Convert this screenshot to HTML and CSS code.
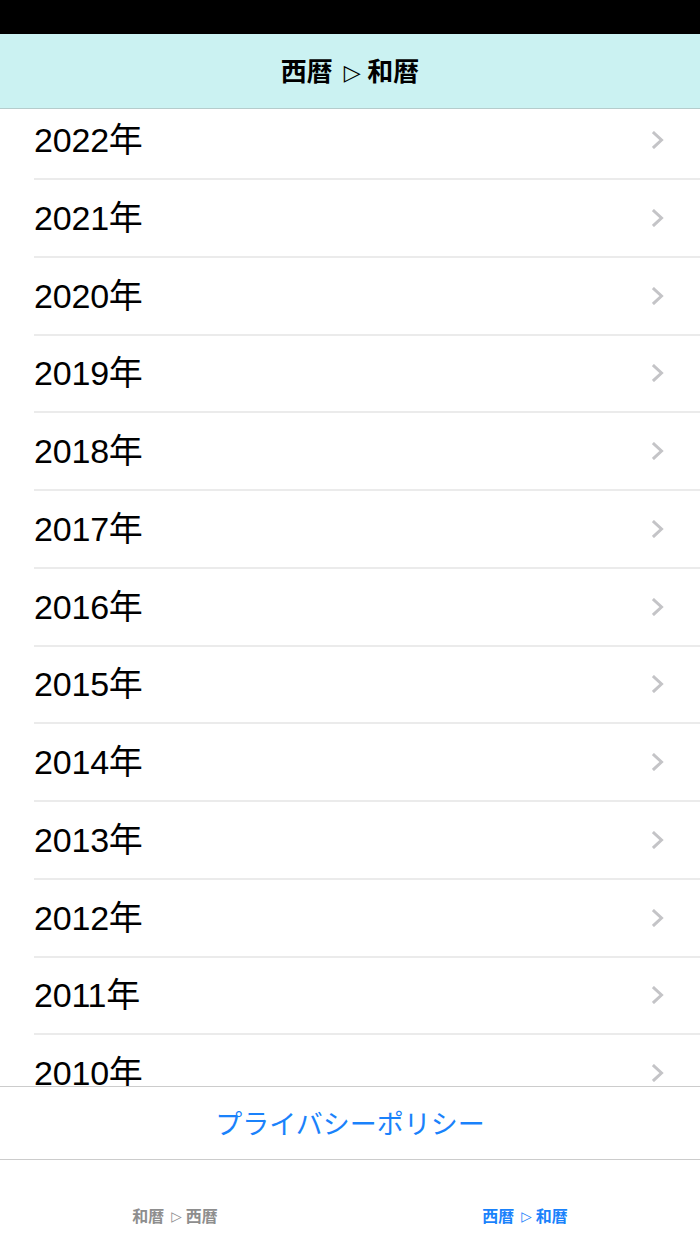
FILE: index.html
```html
<!DOCTYPE html>
<html lang="ja">
<head>
<meta charset="utf-8">
<title>西暦 ▷ 和暦</title>
<link rel="stylesheet" href="styles.css">
</head>
<body>
<div class="screen">
  <div class="status-bar"></div>
  <header class="nav-bar">
    <h1 class="nav-title">西暦<span class="arrow">▷</span>和暦</h1>
  </header>
  <main class="list-viewport">
    <ul class="year-list">
      <li class="year-row"><span class="year-label">2022年</span><svg class="chevron" viewBox="0 0 12 18"><path d="M2 2 L9.5 9 L2 16"/></svg></li>
      <li class="year-row"><span class="year-label">2021年</span><svg class="chevron" viewBox="0 0 12 18"><path d="M2 2 L9.5 9 L2 16"/></svg></li>
      <li class="year-row"><span class="year-label">2020年</span><svg class="chevron" viewBox="0 0 12 18"><path d="M2 2 L9.5 9 L2 16"/></svg></li>
      <li class="year-row"><span class="year-label">2019年</span><svg class="chevron" viewBox="0 0 12 18"><path d="M2 2 L9.5 9 L2 16"/></svg></li>
      <li class="year-row"><span class="year-label">2018年</span><svg class="chevron" viewBox="0 0 12 18"><path d="M2 2 L9.5 9 L2 16"/></svg></li>
      <li class="year-row"><span class="year-label">2017年</span><svg class="chevron" viewBox="0 0 12 18"><path d="M2 2 L9.5 9 L2 16"/></svg></li>
      <li class="year-row"><span class="year-label">2016年</span><svg class="chevron" viewBox="0 0 12 18"><path d="M2 2 L9.5 9 L2 16"/></svg></li>
      <li class="year-row"><span class="year-label">2015年</span><svg class="chevron" viewBox="0 0 12 18"><path d="M2 2 L9.5 9 L2 16"/></svg></li>
      <li class="year-row"><span class="year-label">2014年</span><svg class="chevron" viewBox="0 0 12 18"><path d="M2 2 L9.5 9 L2 16"/></svg></li>
      <li class="year-row"><span class="year-label">2013年</span><svg class="chevron" viewBox="0 0 12 18"><path d="M2 2 L9.5 9 L2 16"/></svg></li>
      <li class="year-row"><span class="year-label">2012年</span><svg class="chevron" viewBox="0 0 12 18"><path d="M2 2 L9.5 9 L2 16"/></svg></li>
      <li class="year-row"><span class="year-label">2011年</span><svg class="chevron" viewBox="0 0 12 18"><path d="M2 2 L9.5 9 L2 16"/></svg></li>
      <li class="year-row"><span class="year-label">2010年</span><svg class="chevron" viewBox="0 0 12 18"><path d="M2 2 L9.5 9 L2 16"/></svg></li>
    </ul>
  </main>
  <div class="privacy-bar">
    <a class="privacy-link" href="#">プライバシーポリシー</a>
  </div>
  <nav class="tab-bar">
    <div class="tab-item">和暦<span class="arrow">▷</span>西暦</div>
    <div class="tab-item tab-active">西暦<span class="arrow">▷</span>和暦</div>
  </nav>
</div>
</body>
</html>
```

FILE: styles.css
```css
* { box-sizing: border-box; }
html, body {
  margin: 0;
  padding: 0;
  background: #ffffff;
}
body {
  font-family: "Liberation Sans", "Noto Sans CJK JP", sans-serif;
  color: #000000;
}
.screen {
  width: 700px;
  height: 1244px;
  display: flex;
  flex-direction: column;
  overflow: hidden;
}
.status-bar {
  height: 34px;
  background: #000000;
  flex: none;
}
.nav-bar {
  height: 75px;
  flex: none;
  background: #cbf2f2;
  border-bottom: 1px solid #b5cccc;
  display: flex;
  align-items: center;
  justify-content: center;
}
.nav-title {
  margin: 0;
  font-family: "Noto Sans CJK JP", sans-serif;
  font-weight: 700;
  font-size: 26px;
  line-height: 30px;
  color: #000000;
}
.arrow {
  font-family: "DejaVu Sans", sans-serif;
  font-size: 0.85em;
  font-weight: 700;
  margin: 0 0.3em 0 0.5em;
  vertical-align: 0.06em;
}
.list-viewport {
  flex: 1;
  overflow: hidden;
  min-height: 0;
}
.year-list {
  list-style: none;
  margin: -6.75px 0 0 0;
  padding: 0;
}
.year-row {
  height: 77.75px;
  margin-left: 34px;
  padding-right: 36px;
  border-bottom: 2px solid #ebebeb;
  display: flex;
  align-items: center;
  justify-content: space-between;
}
.year-label {
  font-family: "Liberation Sans", "Noto Sans CJK JP", sans-serif;
  font-size: 34px;
  line-height: 40px;
  letter-spacing: -0.2px;
  color: #000000;
}
.chevron {
  width: 12px;
  height: 18px;
  fill: none;
  stroke: #c4c4c7;
  stroke-width: 3;
  stroke-linecap: square;
  stroke-linejoin: miter;
}
.privacy-bar {
  height: 74px;
  flex: none;
  border-top: 1px solid #cccccc;
  border-bottom: 1px solid #cccccc;
  display: flex;
  align-items: center;
  justify-content: center;
}
.privacy-link {
  font-family: "Noto Sans CJK JP", sans-serif;
  font-size: 27px;
  line-height: 30px;
  color: #1a82fb;
  text-decoration: none;
}
.tab-bar {
  height: 84px;
  flex: none;
  display: grid;
  grid-template-columns: 1fr 1fr;
}
.tab-item {
  padding-top: 45px;
  text-align: center;
  font-family: "Noto Sans CJK JP", sans-serif;
  font-weight: 700;
  font-size: 16px;
  line-height: 20px;
  color: #8e8e8e;
}
.tab-active {
  color: #1a82fb;
}
```
